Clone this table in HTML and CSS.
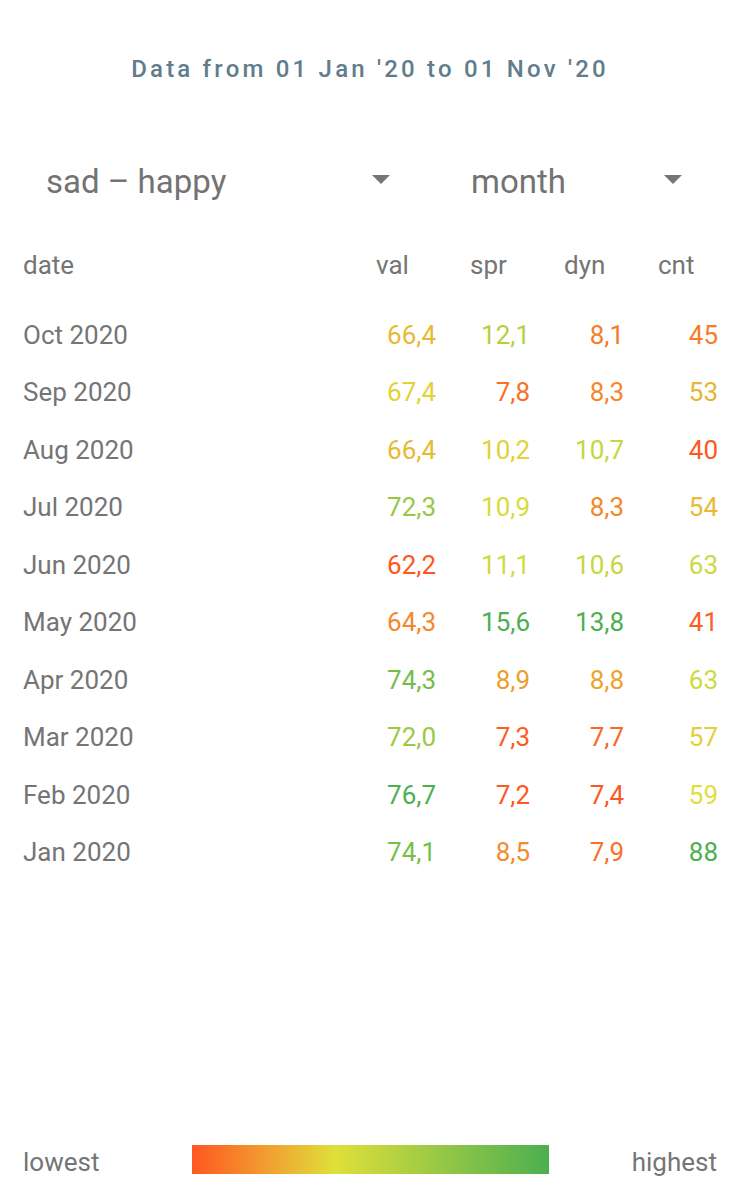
FILE: index.html
```html
<!DOCTYPE html>
<html lang="en">
<head>
<meta charset="utf-8">
<title>Mood statistics</title>
<link rel="stylesheet" href="styles.css">
</head>
<body>
<div class="page">
  <h1 class="title">Data from 01 Jan '20 to 01 Nov '20</h1>

  <div class="spinners">
    <div class="spinner spinner-scale"><span class="spinner-text">sad – happy</span><span class="arrow"></span></div>
    <div class="spinner spinner-period"><span class="spinner-text">month</span><span class="arrow"></span></div>
  </div>

  <div class="table">
    <div class="row head">
      <span class="date">date</span><span class="num">val</span><span class="num">spr</span><span class="num">dyn</span><span class="num">cnt</span>
    </div>
    <div class="row">
      <span class="date">Oct 2020</span><span class="num" style="color:#e8ba33">66,4</span><span class="num" style="color:#b2d141">12,1</span><span class="num" style="color:#f67c29">8,1</span><span class="num" style="color:#f77b28">45</span>
    </div>
    <div class="row">
      <span class="date">Sep 2020</span><span class="num" style="color:#e2d238">67,4</span><span class="num" style="color:#f97026">7,8</span><span class="num" style="color:#f4872a">8,3</span><span class="num" style="color:#e9b432">53</span>
    </div>
    <div class="row">
      <span class="date">Aug 2020</span><span class="num" style="color:#e8ba33">66,4</span><span class="num" style="color:#e2d137">10,2</span><span class="num" style="color:#c3d73e">10,7</span><span class="num" style="color:#ff5722">40</span>
    </div>
    <div class="row">
      <span class="date">Jul 2020</span><span class="num" style="color:#96c845">72,3</span><span class="num" style="color:#d5dd3b">10,9</span><span class="num" style="color:#f4872a">8,3</span><span class="num" style="color:#e8bb33">54</span>
    </div>
    <div class="row">
      <span class="date">Jun 2020</span><span class="num" style="color:#ff5722">62,2</span><span class="num" style="color:#cfdb3c">11,1</span><span class="num" style="color:#c6d83e">10,6</span><span class="num" style="color:#ccda3d">63</span>
    </div>
    <div class="row">
      <span class="date">May 2020</span><span class="num" style="color:#f3892b">64,3</span><span class="num" style="color:#4caf50">15,6</span><span class="num" style="color:#4caf50">13,8</span><span class="num" style="color:#fd5e23">41</span>
    </div>
    <div class="row">
      <span class="date">Apr 2020</span><span class="num" style="color:#75bd4a">74,3</span><span class="num" style="color:#ef9c2e">8,9</span><span class="num" style="color:#eda22f">8,8</span><span class="num" style="color:#ccda3d">63</span>
    </div>
    <div class="row">
      <span class="date">Mar 2020</span><span class="num" style="color:#9bc944">72,0</span><span class="num" style="color:#fe5b23">7,3</span><span class="num" style="color:#fb6725">7,7</span><span class="num" style="color:#e3d037">57</span>
    </div>
    <div class="row">
      <span class="date">Feb 2020</span><span class="num" style="color:#4caf50">76,7</span><span class="num" style="color:#ff5722">7,2</span><span class="num" style="color:#ff5722">7,4</span><span class="num" style="color:#dfdf3a">59</span>
    </div>
    <div class="row">
      <span class="date">Jan 2020</span><span class="num" style="color:#78be49">74,1</span><span class="num" style="color:#f38c2b">8,5</span><span class="num" style="color:#f97227">7,9</span><span class="num" style="color:#4caf50">88</span>
    </div>
  </div>

  <div class="legend">
    <span class="legend-text legend-low">lowest</span>
    <span class="legend-bar"></span>
    <span class="legend-text legend-high">highest</span>
  </div>
</div>
</body>
</html>
```

FILE: styles.css
```css
* { box-sizing: border-box; }

html, body {
  margin: 0;
  padding: 0;
  background: #ffffff;
}

body {
  font-family: Roboto, "Liberation Sans", sans-serif;
  color: #757575;
}

.page {
  display: flex;
  flex-direction: column;
  min-height: 1200px;
  padding-bottom: 23.5px;
}

.title {
  margin: 0;
  padding-top: 53px;
  font-size: 24px;
  line-height: 32px;
  font-weight: 500;
  letter-spacing: 3.2px;
  text-align: center;
  color: #607d8b;
}

.spinners {
  display: grid;
  grid-template-columns: 344px 211px;
  column-gap: 81px;
  padding-left: 46px;
  margin-top: 77px;
}

.spinner {
  display: flex;
  align-items: center;
  justify-content: space-between;
  height: 40px;
}

.spinner-text {
  font-size: 33px;
  line-height: 40px;
  color: #737373;
}

.arrow {
  width: 0;
  height: 0;
  border-left: 9px solid transparent;
  border-right: 9px solid transparent;
  border-top: 9px solid #757575;
  margin-bottom: 5px;
}

.table {
  margin-top: 35px;
  padding: 0 22px 0 23px;
}

.row {
  display: grid;
  grid-template-columns: 1fr repeat(4, 60px);
  column-gap: 34px;
  font-size: 26px;
  line-height: 57.5px;
}

.row.head {
  margin-bottom: 12px;
}

.row .num {
  text-align: right;
}

.row.head .num {
  text-align: left;
}

.legend {
  margin-top: auto;
  display: grid;
  grid-template-columns: 1fr 357px 1fr;
  align-items: center;
  padding: 0 23px;
  font-size: 26px;
  line-height: 29px;
}

.legend-text {
  padding-top: 5px;
}

.legend-bar {
  height: 29px;
  background: linear-gradient(to right, #ff5722 0%, #f29b2f 20%, #dfe03a 40%, #4caf50 100%);
}

.legend-high {
  text-align: right;
}
```
